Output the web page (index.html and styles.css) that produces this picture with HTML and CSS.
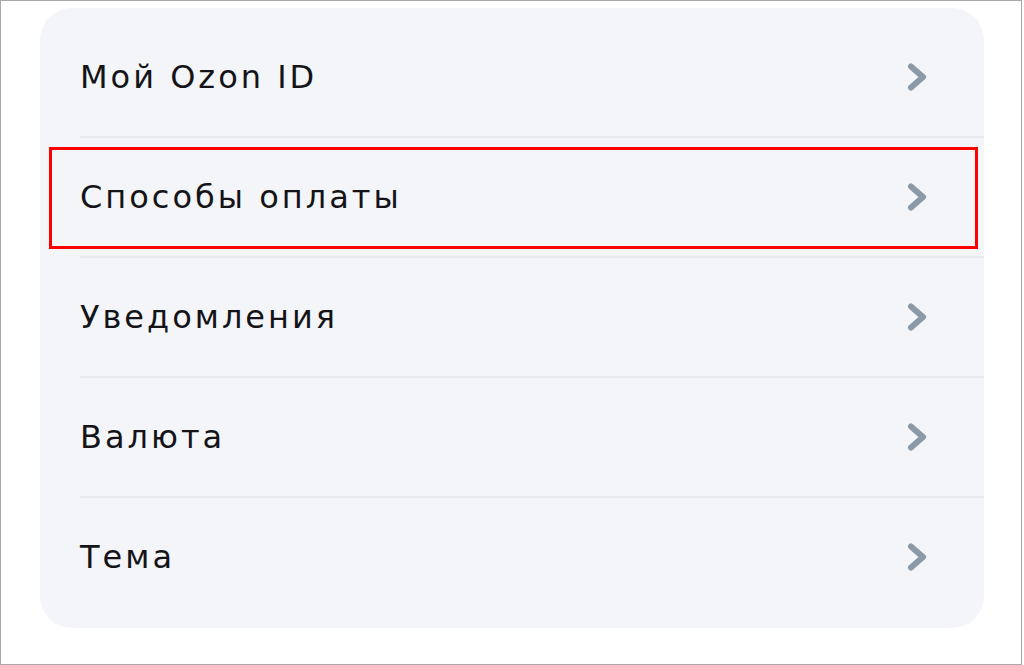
FILE: index.html
```html
<!DOCTYPE html>
<html lang="ru">
<head>
<meta charset="utf-8">
<link rel="stylesheet" href="styles.css">
</head>
<body>
<div class="frame">
  <div class="card">
    <div class="row"><span class="label">Мой Ozon ID</span><svg class="chev" viewBox="0 0 20 28"><path d="M4 3.5 L16 14 L4 24.5"/></svg></div>
    <div class="row selected"><span class="label">Способы оплаты</span><svg class="chev" viewBox="0 0 20 28"><path d="M4 3.5 L16 14 L4 24.5"/></svg></div>
    <div class="row"><span class="label">Уведомления</span><svg class="chev" viewBox="0 0 20 28"><path d="M4 3.5 L16 14 L4 24.5"/></svg></div>
    <div class="row"><span class="label">Валюта</span><svg class="chev" viewBox="0 0 20 28"><path d="M4 3.5 L16 14 L4 24.5"/></svg></div>
    <div class="row last"><span class="label">Тема</span><svg class="chev" viewBox="0 0 20 28"><path d="M4 3.5 L16 14 L4 24.5"/></svg></div>
  </div>
</div>
</body>
</html>
```
FILE: styles.css
```css
html, body {
  margin: 0;
  padding: 0;
  background: #ffffff;
}
.frame {
  box-sizing: border-box;
  width: 1022px;
  height: 665px;
  border: 1px solid #a8a8a8;
  padding: 7px 0 0 39px;
}
.card {
  width: 944px;
  height: 620px;
  box-sizing: border-box;
  background: #f4f5f9;
  border-radius: 32px;
  padding: 10px 0 12px 40px;
  display: flex;
  flex-direction: column;
}
.row {
  position: relative;
  height: 118px;
  border-bottom: 2px solid #e8eaee;
  display: flex;
  align-items: center;
  justify-content: space-between;
  padding-right: 57px;
  flex: none;
}
.row.last {
  border-bottom: none;
}
.label {
  font-family: "DejaVu Sans", "Noto Sans", sans-serif;
  font-size: 32px;
  color: #141418;
  letter-spacing: 3px;
}
.chev {
  width: 20px;
  height: 28px;
}
.chev path {
  fill: none;
  stroke: #8c9aa7;
  stroke-width: 6;
  stroke-linecap: round;
  stroke-linejoin: round;
}
.selected::after {
  content: "";
  position: absolute;
  left: -31px;
  top: 9px;
  width: 929px;
  height: 102px;
  box-sizing: border-box;
  border: 3px solid #ff0000;
}
```
